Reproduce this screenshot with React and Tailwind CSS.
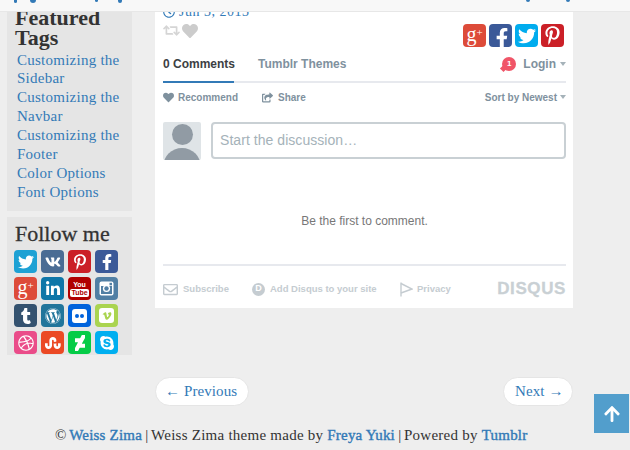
import { FaTwitter, FaVk, FaPinterestP, FaFacebookF, FaLinkedinIn, FaTumblr, FaWordpress, FaVimeoV, FaDribbble, FaStumbleupon, FaDeviantart, FaSkype, FaHeart, FaRegClock, FaRetweet, FaArrowUp, FaShareSquare, FaRegEnvelope } from "react-icons/fa";

const GooglePlus = () => (
  <span className="text-[20px] leading-none -mt-[3px] [font-family:'Liberation_Serif',serif]">g<span className="text-[11px] align-[5px]">+</span></span>
);

const YouTube = () => (
  <span className="flex flex-col items-center leading-none [font-family:'Liberation_Sans',sans-serif] font-bold">
    <span className="text-[7px] leading-[8px]">You</span>
    <span className="text-[7px] leading-[8px] px-[1px] bg-white text-[#b00000] rounded-[2px]">Tube</span>
  </span>
);

const Instagram = () => (
  <svg width="15" height="15" viewBox="0 0 15 15">
    <rect x="0.5" y="0.5" width="14" height="14" rx="2" fill="#fff" />
    <rect x="2" y="5" width="11" height="8" fill="#517fa4" />
    <circle cx="7.5" cy="7.5" r="3.6" fill="#fff" />
    <circle cx="7.5" cy="7.5" r="2.2" fill="#517fa4" />
    <rect x="10.5" y="1.8" width="2.5" height="2.5" fill="#517fa4" />
  </svg>
);

const Flickr = () => (
  <span className="flex gap-[1px] bg-white rounded-[3px] px-[3px] py-[5px]">
    <span className="w-[4px] h-[4px] rounded-full bg-[#0063dc]" />
    <span className="w-[4px] h-[4px] rounded-full bg-[#0063dc]" />
  </span>
);

const Vimeo = () => (
  <span className="w-[15px] h-[15px] bg-white rounded-[3px] flex items-center justify-center text-[#aad450] text-[10px]"><FaVimeoV /></span>
);

const PrivacyFlag = () => (
  <svg width="13" height="15" viewBox="0 0 13 15" fill="none" stroke="#c5ccd1" strokeWidth="1.4">
    <path d="M1 0.5 V14.5" />
    <path d="M1 1.5 L12 7 L1 11" />
  </svg>
);

const socials = [
  { el: <FaTwitter />, bg: "bg-[#1da1d4]" },
  { el: <FaVk />, bg: "bg-[#4a6c94]" },
  { el: <FaPinterestP />, bg: "bg-[#cb2027]" },
  { el: <FaFacebookF />, bg: "bg-[#3b5998]" },
  { el: <GooglePlus />, bg: "bg-[#dd4b39]" },
  { el: <FaLinkedinIn />, bg: "bg-[#0e76a8]" },
  { el: <YouTube />, bg: "bg-[#b00000]" },
  { el: <Instagram />, bg: "bg-[#517fa4]" },
  { el: <FaTumblr />, bg: "bg-[#34526f]" },
  { el: <FaWordpress />, bg: "bg-[#21759b]" },
  { el: <Flickr />, bg: "bg-[#0063dc]" },
  { el: <Vimeo />, bg: "bg-[#aad450]" },
  { el: <FaDribbble />, bg: "bg-[#ea4c89]" },
  { el: <FaStumbleupon />, bg: "bg-[#eb4924]" },
  { el: <FaDeviantart />, bg: "bg-[#05cc47]" },
  { el: <FaSkype />, bg: "bg-[#00aff0]" },
];

const tags = ["Customizing the Sidebar", "Customizing the Navbar", "Customizing the Footer", "Color Options", "Font Options"];

const Caret = () => (
  <span className="inline-block w-0 h-0 border-x-[3.5px] border-x-transparent border-t-[4px] border-t-[#a5b2b9]" />
);

const Sidebar = () => (
  <aside className="w-[125px] shrink-0 flex flex-col gap-[6px]">
    <div className="bg-[#e5e5e5] h-[211px] flex flex-col justify-end pb-[9.5px]">
      <h3 className="pl-2 mb-[3px] text-[22px] leading-[20px] font-bold text-[#333]">Featured Tags</h3>
      <ul className="pl-[10px] pr-1 text-[15px] leading-[18.86px] tracking-[0.25px] text-[#337ab7]">
        {tags.map((t) => (
          <li key={t}>{t}</li>
        ))}
      </ul>
    </div>
    <div className="bg-[#e5e5e5] h-[138px] pt-[2px]">
      <h3 className="pl-2 text-[22px] leading-[30px] text-[#333] font-normal [-webkit-text-stroke:0.3px]">Follow me</h3>
      <div className="pl-[7px] mt-[1px] grid grid-cols-[repeat(4,23px)] gap-[4px]">
        {socials.map(({ el, bg }, i) => (
          <div key={i} className={`w-[23px] h-[23px] rounded-[4px] flex items-center justify-center text-white text-[16px] ${bg}`}>
            {el}
          </div>
        ))}
      </div>
    </div>
  </aside>
);

const Disqus = () => (
  <div className="[font-family:'Liberation_Sans',Arial,sans-serif] pl-2 pr-[7px]">
    <div className="flex justify-between items-end h-[30px] border-b-2 border-[#e7e9ee]">
      <div className="flex gap-6 text-[12px] font-bold text-[#7f919e] whitespace-nowrap">
        <span className="w-[71px] pb-[8px] -mb-[2px] text-[#3c4043] border-b-2 border-[#337ab7]">0 Comments</span>
        <span>Tumblr Themes</span>
      </div>
      <div className="flex items-center gap-[7px] text-[12px] font-bold text-[#7f919e] pb-[8px]">
        <span className="relative w-[14px] h-[14px] rounded-full bg-[#f05568] text-white text-[8px] flex items-center justify-center">
          1
          <span className="absolute -left-[1px] bottom-0 w-[5px] h-[5px] bg-[#f05568] rotate-45" />
        </span>
        <span className="flex items-center gap-[4px]">Login <Caret /></span>
      </div>
    </div>
    <div className="flex justify-between items-center h-[28px] text-[10px] font-bold text-[#7f919e]">
      <div className="flex gap-6">
        <span className="flex items-center gap-1"><FaHeart className="text-[11px]" /> Recommend</span>
        <span className="flex items-center gap-[5px]"><FaShareSquare className="text-[11px]" /> Share</span>
      </div>
      <span className="flex items-center gap-[3px]">Sort by Newest <Caret /></span>
    </div>
    <div className="flex gap-[10px] mt-[11px]">
      <div className="w-[38px] h-[38px] bg-[#dfe4e7] rounded-[2px] overflow-hidden flex flex-col items-center shrink-0">
        <span className="w-[21px] h-[21px] rounded-full bg-[#919ba4] mt-[2px] shrink-0" />
        <span className="w-[38px] h-[20px] rounded-t-full bg-[#919ba4] mt-[3px] shrink-0" />
      </div>
      <div className="flex-1 h-[37px] border-2 border-[#c9d0d4] rounded-[4px] flex items-center pl-[7px] text-[14px] tracking-[0.05px] text-[#a5b2b9]">Start the discussion…</div>
    </div>
    <p className="text-center text-[12px] text-[#777] mt-[54px] leading-[14px]">Be the first to comment.</p>
    <div className="border-t-2 border-[#e7e9ee] mt-[36px] h-[44px] pt-[4px] flex items-center justify-between text-[9.5px] font-bold text-[#c5ccd1]">
      <div className="flex items-center">
        <span className="flex items-center gap-[5px] w-[89px]"><FaRegEnvelope className="text-[15px]" /> Subscribe</span>
        <span className="flex items-center gap-[5px] w-[148px]"><span className="w-[13px] h-[13px] rounded-full bg-[#c5ccd1] text-white text-[9px] flex items-center justify-center">D</span> Add Disqus to your site</span>
        <span className="flex items-center gap-[4px]"><PrivacyFlag /> Privacy</span>
      </div>
      <span className="text-[17px] font-bold tracking-[0.6px] text-[#c9d0d4] [-webkit-text-stroke:0.3px]">DISQUS</span>
    </div>
  </div>
);

const App = () => (
  <div className="relative w-[630px] h-[450px] overflow-hidden bg-[#eeeeee] text-[15px] [font-family:'Liberation_Serif','Times_New_Roman',serif]">
    {/* fixed navbar, its text is scrolled almost out of view */}
    <div className="absolute inset-x-0 top-0 h-[12px] bg-[#f8f8f8] border-b border-[#e7e7e7] z-10">
      <span className="absolute left-[14px] top-0 w-[3px] h-[3px] bg-[#337ab7] rounded-b-full" />
      <span className="absolute left-[30px] top-0 w-[6px] h-[3px] bg-[#337ab7] rounded-b-full" />
      <span className="absolute left-[95px] top-0 w-[3px] h-[2px] bg-[#337ab7] rounded-b-full" />
      <span className="absolute left-[118px] top-0 w-[4px] h-[3px] bg-[#337ab7] rounded-b-full" />
      <span className="absolute left-[526px] top-0 w-[4px] h-[2px] bg-[#337ab7] rounded-b-full" />
      <span className="absolute left-[566px] top-0 w-[4px] h-[2px] bg-[#337ab7] rounded-b-full" />
    </div>

    <div className="flex items-start pl-[7px]">
      <Sidebar />
      <main className="w-[418px] ml-[23px]">
        <div className="bg-white h-[308px]">
          <div className="px-2 flex justify-between h-[53px]">
            <div className="pt-[3px]">
              <div className="flex items-center gap-1 text-[#337ab7] text-[14px] leading-[18px] tracking-[0.5px]"><FaRegClock className="text-[12px]" /> Jun 3, 2013</div>
              <div className="flex items-center gap-[2px] text-[#d5d5d5] mt-[1px] text-[17px]"><FaRetweet /><FaHeart className="text-[16px] text-[#ccc]" /></div>
            </div>
            <div className="flex gap-[3px] pt-[24px] pr-[1px] h-[47px]">
              <span className="w-[23px] h-[23px] rounded-[4px] bg-[#dd4b39] text-white flex items-center justify-center"><GooglePlus /></span>
              <span className="w-[23px] h-[23px] rounded-[4px] bg-[#3b5998] text-white flex items-center justify-end overflow-hidden text-[20px] pt-[4px]"><FaFacebookF /></span>
              <span className="w-[23px] h-[23px] rounded-[4px] bg-[#00acee] text-white flex items-center justify-center text-[18px]"><FaTwitter /></span>
              <span className="w-[23px] h-[23px] rounded-[4px] bg-[#cb2027] text-white flex items-center justify-center text-[19px]"><FaPinterestP /></span>
            </div>
          </div>
          <Disqus />
        </div>
        <div className="flex justify-between mt-[69px] tracking-[0.1px]">
          <span className="h-[29px] w-[94px] pl-[9px] rounded-[15px] bg-white border border-[#e5e5e5] text-[#337ab7] flex items-center">← Previous</span>
          <span className="h-[29px] w-[70px] pl-[11px] rounded-[15px] bg-white border border-[#e5e5e5] text-[#337ab7] flex items-center">Next →</span>
        </div>
      </main>
    </div>

    <p className="absolute top-[426px] left-[55px] text-[15px] leading-[18px] tracking-[0.25px] text-[#333] whitespace-nowrap">
      <span className="tracking-[-0.5px]">© </span><span className="text-[#337ab7] tracking-[0.2px] [-webkit-text-stroke:0.4px]">Weiss Zima</span><span className="tracking-[-0.5px]"> | </span>Weiss Zima theme made by <span className="text-[#337ab7] tracking-[0.2px] [-webkit-text-stroke:0.4px]">Freya Yuki</span><span className="tracking-[-0.5px]"> | </span>Powered by <span className="text-[#337ab7] tracking-[0.2px] [-webkit-text-stroke:0.4px]">Tumblr</span>
    </p>

    <div className="absolute left-[594px] top-[394px] w-[35px] h-[39px] bg-[#529ecc] text-white flex items-center justify-center text-[18px]"><FaArrowUp /></div>
  </div>
);

export default App;
